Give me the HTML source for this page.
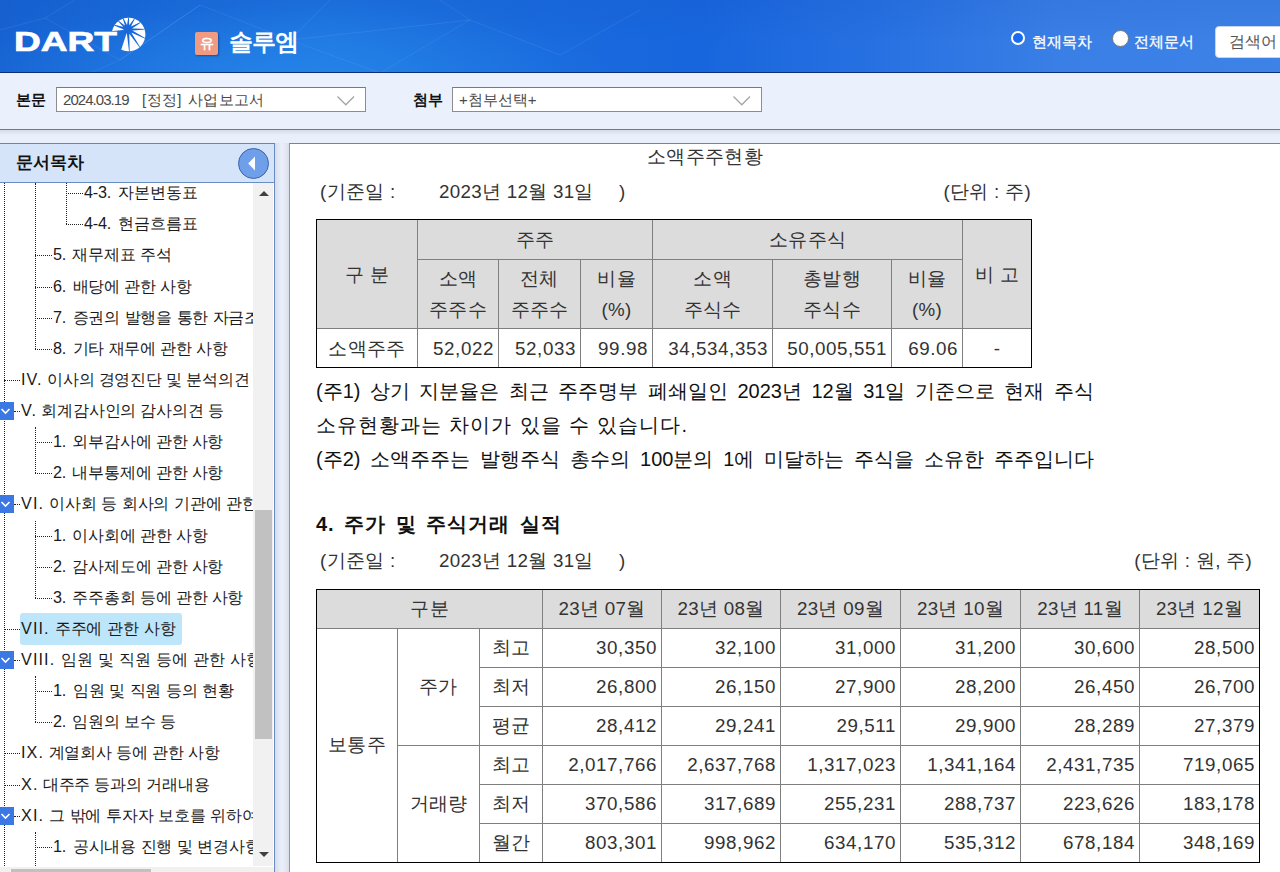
<!DOCTYPE html>
<html lang="ko">
<head>
<meta charset="utf-8">
<title>DART</title>
<style>
*{box-sizing:border-box;margin:0;padding:0}
html,body{width:1280px;height:872px;overflow:hidden}
body{position:relative;background:#e9f0fc;font-family:"Liberation Sans",sans-serif;color:#111;font-size:16px}
.abs{position:absolute;white-space:nowrap}
/* ---------- header ---------- */
#hdr{position:absolute;left:0;top:0;width:1280px;height:73px;border-bottom:1px solid #0d2f78;overflow:hidden;
 background:linear-gradient(90deg,#1763d3 0px,#1a6cdb 160px,#1d74e0 330px,#1a6bdd 520px,#1866dd 700px,#2771e2 880px,#3a7fe6 1060px,#3d82e6 1280px)}
#hdr svg.net{position:absolute;left:0;top:0}
#glow{position:absolute;left:0;top:0;width:1280px;height:73px;background:radial-gradient(ellipse 330px 75px at 290px 80px,rgba(45,150,240,.50),rgba(45,150,240,0) 100%),linear-gradient(180deg,rgba(10,60,170,.10),rgba(10,60,170,0) 60%)}
#logo{position:absolute;left:14px;top:17px}
#corp{position:absolute;left:195px;top:32px;width:23px;height:23px;background:#ef9b84;border-radius:2px;color:#fff;font-size:14px;line-height:23px;text-align:center;font-weight:bold;box-shadow:1px 1px 2px rgba(0,0,40,.35)}
#cname{left:229px;top:25px;color:#fff;font-size:24px;line-height:34px;font-weight:bold;letter-spacing:-1.2px}
.radio{position:absolute;top:31px;width:14px;height:14px;border-radius:50%}
#r1{left:1011px;background:#1a6cf0;border:2.5px solid #fff}
#r2{left:1112px;top:30px;width:17px;height:17px;background:#fff;border:1px solid #767676}
.rl{top:32px;color:#fff;font-size:15px;line-height:20px;-webkit-text-stroke:.3px #fff}
#srch{position:absolute;left:1215px;top:26px;width:80px;height:32px;background:#fff;border-radius:4px;border:1px solid #c8d4ea;color:#555;font-size:15.5px;line-height:30px;padding-left:13px;white-space:nowrap}
/* ---------- toolbar ---------- */
#tb{position:absolute;left:0;top:73px;width:1280px;height:57px;background:#eaf1fd;border-bottom:1px solid #5a7db7}
#tbsh{position:absolute;left:0;top:130px;width:1280px;height:5px;background:linear-gradient(#d5dbe7,#e9f0fc)}
.lbl{top:90px;font-size:15px;line-height:20px;font-weight:bold;color:#111}
.sel{position:absolute;top:87px;height:25px;background:#fff;border:1px solid #8d8d8d;border-top-color:#7a7a7a;font-size:14px;line-height:23px;color:#333;padding-left:6px;white-space:nowrap;overflow:hidden;letter-spacing:-.6px}
.sel svg{position:absolute;top:7px}
.sel .st{position:absolute;top:0;font-size:15px;letter-spacing:.35px;color:#4a4a4a}
/* ---------- sidebar ---------- */
#side{position:absolute;left:0;top:143px;width:275px;height:740px;background:#fff;border-top:1px solid #6186c0;border-right:1px solid #6a8cc2}
#sidehd{position:absolute;left:0;top:0;width:274px;height:39px;background:#d6e4fa;border-bottom:1px solid #6a8dc6}
#sidehd span{position:absolute;left:16px;top:8px;font-size:17px;line-height:22px;font-weight:bold;color:#111;white-space:nowrap}
#fold{position:absolute;left:238px;top:4px;width:31px;height:31px;border-radius:50%;background:#6f9fe9;border:1px solid #3a64ad}
#fold svg{position:absolute;left:-1px;top:-1px}
#tree{position:absolute;left:0;top:39px;width:253px;height:683px;overflow:hidden;background:#fff}
#tree .vl{position:absolute;width:0;border-left:1px dotted #222}
#tree .hl{position:absolute;height:0;border-top:1px dotted #222}
#tree .ic{position:absolute;left:-4px;width:18px;height:18px;background:#3b78e3}
#tree .ic svg{position:absolute;left:0;top:0}
#tree .tl{position:absolute;text-align:justify;text-align-last:justify;height:31px;line-height:31px;font-size:16.2px;color:#1a1a1a;white-space:nowrap;letter-spacing:-.2px}
#tree .rn{letter-spacing:1.1px}
#tree .nn{margin-right:2px}
#tree .sel2{background:#bee6fb;border-radius:3px;padding:0 6px 0 1px;height:32px}
#vsb{position:absolute;left:253px;top:39px;width:20px;height:683px;background:#f1f1f1}
#vsb .up{position:absolute;left:6px;top:8px;width:0;height:0;border:5px solid transparent;border-top:0;border-bottom:5px solid #404040}
#vsb .dn{position:absolute;left:6px;top:669px;width:0;height:0;border:5px solid transparent;border-bottom:0;border-top:5px solid #404040}
#vsb .thumb{position:absolute;left:2px;top:327px;width:17px;height:229px;background:#c1c1c1}
#hsb{position:absolute;left:0;top:723px;width:274px;height:20px;background:#f1f1f1}
#hsb .hthumb{position:absolute;left:11px;top:2px;width:140px;height:16px;background:#c1c1c1}
/* ---------- document ---------- */
#gap{position:absolute;left:275px;top:143px;width:14px;height:740px;background:linear-gradient(90deg,#d6dce9,#e1e7f3 25%,#e9effb 50%,#e4e9f4 72%,#d8dde8)}
#doc{position:absolute;left:289px;top:143px;width:1000px;height:740px;background:#fff;border-left:1px solid #7a9acb;border-top:1px solid #6186c0;overflow:hidden}
#doc .g{font-size:18.75px;line-height:26px;color:#333;letter-spacing:.3px}
#doc .ttl{text-align:center}
#doc .r{text-align:right}
#doc .pw{display:inline-block;white-space:nowrap}
#doc .s{font-family:"Liberation Sans",sans-serif;font-size:20px;line-height:34px;color:#111;letter-spacing:1.2px}
#doc .j{display:flex;justify-content:space-between;flex-wrap:nowrap;letter-spacing:0}
#doc .b{font-weight:bold;letter-spacing:1.2px;word-spacing:1px}
#doc .jl{text-align:justify;text-align-last:justify;letter-spacing:1px}
table.t{position:absolute;border-collapse:collapse;table-layout:fixed;border:1px solid #000;outline:1px solid #000;outline-offset:-1px;font-size:18.75px;color:#333}
table.t th,table.t td{border:1px solid #7f7f7f;padding:0 5px;white-space:nowrap;overflow:hidden;font-weight:normal;line-height:31px;vertical-align:middle;letter-spacing:.3px}
table.t th{background:#dcdcdc;text-align:center}
table.t td{text-align:right;background:#fff}
table.t td.c{text-align:center}
table.t2 th,table.t2 td{padding-bottom:2px}
table.t td:not(.c){letter-spacing:.6px;padding-right:4px}
</style>
</head>
<body>
<div id="hdr">
 <div id="glow"></div>
 <svg class="net" width="1280" height="73" viewBox="0 0 1280 73" fill="none" stroke="#8fc0ff" stroke-opacity=".13" stroke-width="1">
  <path d="M0 30 L45 18 L120 60 L200 5 L290 40 L330 0 M45 18 L75 0 M120 60 L90 73 M290 40 L380 73 L470 20 L560 55 L640 10 M470 20 L440 0 M200 5 L120 60 M290 40 L470 20"/>
 </svg>
 <svg id="logo" width="134" height="40" viewBox="0 0 134 40">
  <text x="0" y="34" font-family="Liberation Sans, sans-serif" font-weight="bold" font-size="28.5" fill="#fff" stroke="#fff" stroke-width=".7" textLength="103" lengthAdjust="spacingAndGlyphs">DART</text>
 </svg>
 <svg id="burst" style="position:absolute;left:0;top:0" width="160" height="73" viewBox="0 0 160 73"><defs><clipPath id="cc"><circle cx="128.6" cy="34.5" r="16.8"/></clipPath></defs><g clip-path="url(#cc)"><path d="M127.8 29.5 L113.9 72.3 L123.3 74.3 L132.9 74.2 L142.3 72.1 L151.0 68.1 L158.6 62.3 L164.9 55.0 L169.4 46.5 L172.1 37.3 L172.8 27.7 L171.4 18.2 L168.0 9.2 L162.8 1.2 L156.0 -5.6 L147.9 -10.8 L138.9 -14.1 L129.4 -15.5 L119.8 -14.8 L110.6 -12.1 L102.2 -7.5 L94.9 -1.2 L89.1 6.5 L85.1 15.2 L83.1 24.6 L83.0 34.2 Z" fill="#fff"/><path d="M125.81 27.54 L113.74 24.62 L113.56 25.19 L125.04 29.92 Z M126.78 26.90 L117.93 20.21 L117.53 20.65 L125.11 28.76 Z M127.97 26.71 L123.06 17.56 L122.51 17.80 L125.67 27.69 Z M129.22 27.09 L128.99 16.72 L128.40 16.68 L126.73 26.92 Z M130.18 28.04 L135.29 18.08 L134.78 17.76 L128.06 26.72 Z M130.59 29.38 L141.40 22.30 L141.11 21.78 L129.38 27.19 Z M130.32 30.71 L145.55 29.49 L145.54 28.89 L130.28 28.21 Z M129.46 31.75 L145.73 38.97 L146.00 38.44 L130.60 29.52 Z M128.16 32.27 L140.00 48.12 L140.49 47.78 L130.23 30.87 Z M126.73 32.08 L129.09 52.30 L129.69 52.26 L129.22 31.91 Z" fill="#1a69d9"/></g><circle cx="127.8" cy="29.5" r="4.3" fill="#1a69d9"/></svg>
 <div id="corp">유</div>
 <div id="cname" class="abs">솔루엠</div>
 <div id="r1" class="radio"></div><div class="abs rl" style="left:1032px">현재목차</div>
 <div id="r2" class="radio"></div><div class="abs rl" style="left:1134px">전체문서</div>
 <div id="srch">검색어</div>
</div>
<div id="tb"></div><div id="tbsh"></div>
<div class="abs lbl" style="left:16px">본문</div>
<div class="sel" style="left:56px;width:310px"><span class="st" style="left:6px;letter-spacing:-.95px">2024.03.19</span><span class="st" style="left:85px">[정정]</span><span class="st" style="left:131px">사업보고서</span><svg style="left:279px" width="20" height="12" viewBox="0 0 20 12"><path d="M1.5 1.5 L9.8 9.8 L18 1.5" fill="none" stroke="#a4a4a4" stroke-width="1.3"/></svg></div>
<div class="abs lbl" style="left:413px">첨부</div>
<div class="sel" style="left:452px;width:310px"><span class="st" style="left:6px;letter-spacing:0">+첨부선택+</span><svg style="left:279px" width="20" height="12" viewBox="0 0 20 12"><path d="M1.5 1.5 L9.8 9.8 L18 1.5" fill="none" stroke="#a4a4a4" stroke-width="1.3"/></svg></div>
<div id="side">
 <div id="sidehd"><span>문서목차</span><div id="fold"><svg width="31" height="31" viewBox="0 0 31 31"><path d="M10.2 15.5 L17 8.6 L17 22.4 Z" fill="#fff"/></svg></div></div>
 <div id="tree">
  <i class="vl" style="left:4px;top:0.0px;height:689.0px"></i>
  <i class="vl" style="left:66px;top:0.0px;height:41.2px"></i>
  <i class="vl" style="left:35px;top:0.0px;height:165.8px"></i>
  <i class="vl" style="left:35px;top:244.1px;height:46.1px"></i>
  <i class="vl" style="left:35px;top:337.5px;height:77.3px"></i>
  <i class="vl" style="left:35px;top:493.2px;height:46.1px"></i>
  <i class="vl" style="left:35px;top:648.8px;height:40.2px"></i>
  <i class="hl" style="left:66px;top:10.1px;width:17px"></i>
  <span class="tl" style="left:84px;top:-5.9px;width:113.5px"><span class="nn">4-3.</span> 자본변동표</span>
  <i class="hl" style="left:66px;top:41.2px;width:17px"></i>
  <span class="tl" style="left:84px;top:25.2px;width:113.5px"><span class="nn">4-4.</span> 현금흐름표</span>
  <i class="hl" style="left:35px;top:72.4px;width:17px"></i>
  <span class="tl" style="left:53px;top:56.4px;width:117.7px"><span class="nn">5.</span> 재무제표 주석</span>
  <i class="hl" style="left:35px;top:103.5px;width:17px"></i>
  <span class="tl" style="left:53px;top:87.5px;width:139.0px"><span class="nn">6.</span> 배당에 관한 사항</span>
  <i class="hl" style="left:35px;top:134.6px;width:17px"></i>
  <span class="tl" style="left:53px;top:118.6px;width:311.0px"><span class="nn">7.</span> 증권의 발행을 통한 자금조달에 관한 사항</span>
  <i class="hl" style="left:35px;top:165.8px;width:17px"></i>
  <span class="tl" style="left:53px;top:149.8px;width:175.0px"><span class="nn">8.</span> 기타 재무에 관한 사항</span>
  <i class="hl" style="left:4px;top:196.9px;width:16px"></i>
  <span class="tl" style="left:21px;top:180.9px;width:227.7px"><span class="rn">IV.</span> 이사의 경영진단 및 분석의견</span>
  <i class="hl" style="left:14px;top:228.0px;width:6px"></i>
  <i class="ic" style="top:218.8px"><svg width="18" height="18" viewBox="0 0 18 18"><path d="M5.5 7 L9.5 11 L13.5 7" fill="none" stroke="#fff" stroke-width="1.6"/></svg></i>
  <span class="tl" style="left:21px;top:212.0px;width:200.0px"><span class="rn">V.</span> 회계감사인의 감사의견 등</span>
  <i class="hl" style="left:35px;top:259.1px;width:17px"></i>
  <span class="tl" style="left:53px;top:243.1px;width:169.5px"><span class="nn">1.</span> 외부감사에 관한 사항</span>
  <i class="hl" style="left:35px;top:290.3px;width:17px"></i>
  <span class="tl" style="left:53px;top:274.3px;width:169.5px"><span class="nn">2.</span> 내부통제에 관한 사항</span>
  <i class="hl" style="left:14px;top:321.4px;width:6px"></i>
  <i class="ic" style="top:312.2px"><svg width="18" height="18" viewBox="0 0 18 18"><path d="M5.5 7 L9.5 11 L13.5 7" fill="none" stroke="#fff" stroke-width="1.6"/></svg></i>
  <span class="tl" style="left:21px;top:305.4px;width:273.5px"><span class="rn">VI.</span> 이사회 등 회사의 기관에 관한 사항</span>
  <i class="hl" style="left:35px;top:352.5px;width:17px"></i>
  <span class="tl" style="left:53px;top:336.5px;width:154.0px"><span class="nn">1.</span> 이사회에 관한 사항</span>
  <i class="hl" style="left:35px;top:383.7px;width:17px"></i>
  <span class="tl" style="left:53px;top:367.7px;width:169.5px"><span class="nn">2.</span> 감사제도에 관한 사항</span>
  <i class="hl" style="left:35px;top:414.8px;width:17px"></i>
  <span class="tl" style="left:53px;top:398.8px;width:190.0px"><span class="nn">3.</span> 주주총회 등에 관한 사항</span>
  <i class="hl" style="left:4px;top:445.9px;width:16px"></i>
  <span class="tl sel2" style="left:20px;top:429.9px;width:161.5px"><span class="rn">VII.</span> 주주에 관한 사항</span>
  <i class="hl" style="left:14px;top:477.1px;width:6px"></i>
  <i class="ic" style="top:467.9px"><svg width="18" height="18" viewBox="0 0 18 18"><path d="M5.5 7 L9.5 11 L13.5 7" fill="none" stroke="#fff" stroke-width="1.6"/></svg></i>
  <span class="tl" style="left:21px;top:461.1px;width:240.7px"><span class="rn">VIII.</span> 임원 및 직원 등에 관한 사항</span>
  <i class="hl" style="left:35px;top:508.2px;width:17px"></i>
  <span class="tl" style="left:53px;top:492.2px;width:180.7px"><span class="nn">1.</span> 임원 및 직원 등의 현황</span>
  <i class="hl" style="left:35px;top:539.3px;width:17px"></i>
  <span class="tl" style="left:53px;top:523.3px;width:123.0px"><span class="nn">2.</span> 임원의 보수 등</span>
  <i class="hl" style="left:4px;top:570.4px;width:16px"></i>
  <span class="tl" style="left:21px;top:554.4px;width:199.0px"><span class="rn">IX.</span> 계열회사 등에 관한 사항</span>
  <i class="hl" style="left:4px;top:601.6px;width:16px"></i>
  <span class="tl" style="left:21px;top:585.6px;width:187.0px"><span class="rn">X.</span> 대주주 등과의 거래내용</span>
  <i class="hl" style="left:14px;top:632.7px;width:6px"></i>
  <i class="ic" style="top:623.5px"><svg width="18" height="18" viewBox="0 0 18 18"><path d="M5.5 7 L9.5 11 L13.5 7" fill="none" stroke="#fff" stroke-width="1.6"/></svg></i>
  <span class="tl" style="left:21px;top:616.7px;width:325.5px"><span class="rn">XI.</span> 그 밖에 투자자 보호를 위하여 필요한 사항</span>
  <i class="hl" style="left:35px;top:663.8px;width:17px"></i>
  <span class="tl" style="left:53px;top:647.8px;width:207.5px"><span class="nn">1.</span> 공시내용 진행 및 변경사항</span>
 </div>
 <div id="vsb"><i class="up"></i><i class="thumb"></i><i class="dn"></i></div>
 <div id="hsb"><i class="hthumb"></i></div>
</div>
<!--SIDEBAR_END-->
<div id="gap"></div>
<div id="doc">
 <div class="abs g ttl" style="left:26px;top:0px;width:778px">소액주주현황</div>
 <div class="abs g" style="left:30px;top:35px"><span class="pw" style="width:119px">(기준일 :</span><span class="pw" style="width:180px">2023년 12월 31일</span>)</div>
 <div class="abs g r" style="left:441px;top:35px;width:300px">(단위 : 주)</div>
 <table class="t" style="left:26px;top:75px;width:716px">
  <colgroup><col style="width:101px"><col style="width:81px"><col style="width:82px"><col style="width:72px"><col style="width:120px"><col style="width:119px"><col style="width:71px"><col style="width:69px"></colgroup>
  <tr style="height:40px"><th rowspan="2">구 분</th><th colspan="3">주주</th><th colspan="3">소유주식</th><th rowspan="2">비 고</th></tr>
  <tr style="height:69px"><th>소액<br>주주수</th><th>전체<br>주주수</th><th>비율<br>(%)</th><th>소액<br>주식수</th><th>총발행<br>주식수</th><th>비율<br>(%)</th></tr>
  <tr style="height:39px"><td class="c">소액주주</td><td>52,022</td><td>52,033</td><td>99.98</td><td>34,534,353</td><td>50,005,551</td><td>69.06</td><td class="c">-</td></tr>
 </table>
 <div class="abs s j" style="left:26px;top:230px;width:778px"><span>(주1)</span><span>상기</span><span>지분율은</span><span>최근</span><span>주주명부</span><span>폐쇄일인</span><span>2023년</span><span>12월</span><span>31일</span><span>기준으로</span><span>현재</span><span>주식</span></div>
 <div class="abs s jl" style="left:26px;top:264px;width:372px">소유현황과는 차이가 있을 수 있습니다.</div>
 <div class="abs s j" style="left:26px;top:298px;width:778px"><span>(주2)</span><span>소액주주는</span><span>발행주식</span><span>총수의</span><span>100분의</span><span>1에</span><span>미달하는</span><span>주식을</span><span>소유한</span><span>주주입니다</span></div>
 <div class="abs s b jl" style="left:26px;top:363px;width:246px">4. 주가 및 주식거래 실적</div>
 <div class="abs g" style="left:30px;top:404px"><span class="pw" style="width:119px">(기준일 :</span><span class="pw" style="width:180px">2023년 12월 31일</span>)</div>
 <div class="abs g r" style="left:662px;top:404px;width:300px">(단위 : 원, 주)</div>
 <table class="t t2" style="left:26px;top:445px;width:944px">
  <colgroup><col style="width:81px"><col style="width:82px"><col style="width:63px"><col style="width:119px"><col style="width:119px"><col style="width:120px"><col style="width:120px"><col style="width:119px"><col style="width:120px"></colgroup>
  <tr style="height:39px"><th colspan="3">구분</th><th>23년 07월</th><th>23년 08월</th><th>23년 09월</th><th>23년 10월</th><th>23년 11월</th><th>23년 12월</th></tr>
  <tr style="height:39px"><td class="c" rowspan="6">보통주</td><td class="c" rowspan="3">주가</td><td class="c">최고</td><td>30,350</td><td>32,100</td><td>31,000</td><td>31,200</td><td>30,600</td><td>28,500</td></tr>
  <tr style="height:39px"><td class="c">최저</td><td>26,800</td><td>26,150</td><td>27,900</td><td>28,200</td><td>26,450</td><td>26,700</td></tr>
  <tr style="height:39px"><td class="c">평균</td><td>28,412</td><td>29,241</td><td>29,511</td><td>29,900</td><td>28,289</td><td>27,379</td></tr>
  <tr style="height:39px"><td class="c" rowspan="3">거래량</td><td class="c">최고</td><td>2,017,766</td><td>2,637,768</td><td>1,317,023</td><td>1,341,164</td><td>2,431,735</td><td>719,065</td></tr>
  <tr style="height:39px"><td class="c">최저</td><td>370,586</td><td>317,689</td><td>255,231</td><td>288,737</td><td>223,626</td><td>183,178</td></tr>
  <tr style="height:39px"><td class="c">월간</td><td>803,301</td><td>998,962</td><td>634,170</td><td>535,312</td><td>678,184</td><td>348,169</td></tr>
 </table>
</div>
<!--CONTENT_END-->
</body>
</html>
